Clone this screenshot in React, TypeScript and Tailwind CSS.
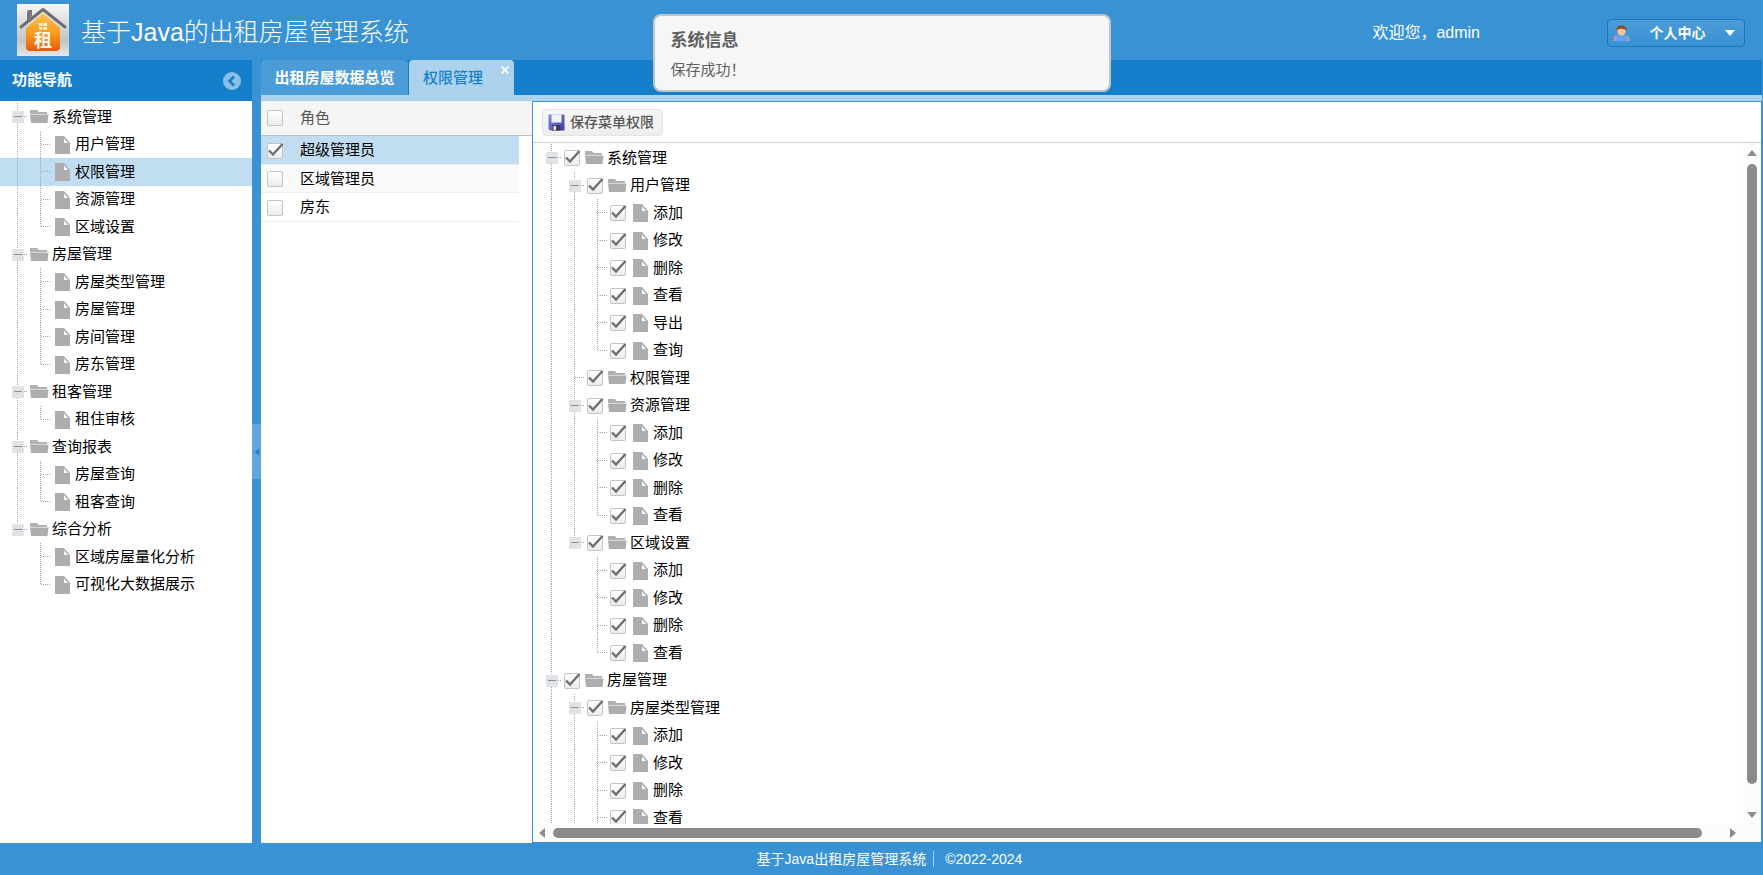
import React, { useState } from 'react';

type TreeNode = { text: string; children?: TreeNode[]; more?: boolean };

type FlatRow = {
  id: string;
  text: string;
  folder: boolean;
  expander: boolean;
  last: boolean;
  // one flag per ancestor level: does its vertical line continue past this row
  lines: boolean[];
};

const leaf = (...names: string[]): TreeNode[] => names.map((text) => ({ text }));

const NAV: TreeNode[] = [
  { text: '系统管理', children: leaf('用户管理', '权限管理', '资源管理', '区域设置') },
  { text: '房屋管理', children: leaf('房屋类型管理', '房屋管理', '房间管理', '房东管理') },
  { text: '租客管理', children: leaf('租住审核') },
  { text: '查询报表', children: leaf('房屋查询', '租客查询') },
  { text: '综合分析', children: leaf('区域房屋量化分析', '可视化大数据展示') },
];

const PERMISSIONS: TreeNode[] = [
  {
    text: '系统管理',
    children: [
      { text: '用户管理', children: leaf('添加', '修改', '删除', '查看', '导出', '查询') },
      { text: '权限管理', children: [] },
      { text: '资源管理', children: leaf('添加', '修改', '删除', '查看') },
      { text: '区域设置', children: leaf('添加', '修改', '删除', '查看') },
    ],
  },
  {
    text: '房屋管理',
    more: true,
    children: [
      {
        text: '房屋类型管理',
        more: true,
        children: [...leaf('添加', '修改', '删除'), { text: '查看', more: true }],
      },
    ],
  },
];

const ROLES = ['超级管理员', '区域管理员', '房东'];

const flatten = (nodes: TreeNode[], lines: boolean[] = [], prefix = ''): FlatRow[] =>
  nodes.flatMap((node, i) => {
    const last = i === nodes.length - 1 && !node.more;
    const id = `${prefix}${i}`;
    const row: FlatRow = {
      id,
      text: node.text,
      folder: node.children !== undefined,
      expander: !!node.children?.length,
      last,
      lines,
    };
    return [row, ...flatten(node.children ?? [], [...lines, !last], `${id}-`)];
  });

const Elbow = ({ expander, last }: { expander: boolean; last: boolean }) => (
  <svg className="h-full w-[23px] shrink-0" aria-hidden="true">
    <path d={last ? 'M11.5 0V14' : 'M11.5 0V28'} stroke="#a6a6a6" strokeDasharray="1 1" />
    <path d="M12 13.5H22" stroke="#a6a6a6" strokeDasharray="1 1" />
    {expander && (
      <>
        <rect x="6" y="8" width="12" height="12" fill="#dfe2e6" />
        <path d="M8 13.5H16" stroke="#8f8f8f" />
      </>
    )}
  </svg>
);

const Line = ({ show }: { show: boolean }) => (
  <svg className="h-full w-[23px] shrink-0" aria-hidden="true">
    {show && <path d="M11.5 0V28" stroke="#a6a6a6" strokeDasharray="1 1" />}
  </svg>
);

const FolderIcon = () => (
  <svg className="h-[18px] w-[23px] shrink-0" viewBox="0 0 23 18" aria-hidden="true">
    <path d="M1 2H8L9.5 4H18V6H1Z" fill="#b0b0b0" />
    <path d="M1 6.5H19.5L18.5 15H2Z" fill="#adadad" />
    <path d="M1 6.3H19" stroke="#d6d6d6" strokeWidth="0.8" />
  </svg>
);

const FileIcon = () => (
  <svg className="h-5 w-[23px] shrink-0" viewBox="0 0 23 20" aria-hidden="true">
    <path d="M3 1H12L18 8V19H3Z" fill="#adadad" />
    <path d="M12 3.5V8H16Z" fill="#fff" />
  </svg>
);

const Check = ({
  id,
  label,
  checked,
  onChange,
}: {
  id?: string;
  label?: string;
  checked: boolean;
  onChange: () => void;
}) => (
  <span className="relative flex size-4 shrink-0">
    <input
      id={id}
      type="checkbox"
      aria-label={label}
      checked={checked}
      onChange={onChange}
      className="size-4 appearance-none rounded-xs border border-[#c4c4c4] bg-linear-to-b from-white to-[#ececec]"
    />
    {checked && (
      <svg className="pointer-events-none absolute inset-0 size-4 overflow-visible" viewBox="0 0 16 16" aria-hidden="true">
        <path d="M2 7.5L6 11.5L15.5 1" fill="none" stroke="#6f6f6f" strokeWidth="2.4" />
      </svg>
    )}
  </span>
);

const Logo = () => (
  <svg className="size-[52px] shrink-0" viewBox="0 0 52 52" role="img" aria-label="租">
    <defs>
      <linearGradient id="logoBack" x1="0" y1="0" x2="0" y2="1">
        <stop offset="0" stopColor="#f6f6f6" />
        <stop offset="0.7" stopColor="#c4c4c6" />
        <stop offset="1" stopColor="#e6e6e6" />
      </linearGradient>
      <linearGradient id="logoHouse" x1="0" y1="0" x2="0" y2="1">
        <stop offset="0" stopColor="#fcc657" />
        <stop offset="0.55" stopColor="#f99a1c" />
        <stop offset="1" stopColor="#e8590a" />
      </linearGradient>
    </defs>
    <rect width="52" height="52" fill="url(#logoBack)" />
    <path d="M10 8Q10 6 12 6H15V12L10 17Z" fill="#77787b" />
    <path d="M9 24L26 9L43 24V43Q43 47 39 47H13Q9 47 9 43Z" fill="url(#logoHouse)" />
    <path d="M4 23L26 5.5L48 23" fill="none" stroke="#6d6e71" strokeWidth="3" strokeLinecap="round" strokeLinejoin="round" />
    <path d="M22 19H25.5V22H22ZM26.5 19H30V22H26.5ZM22 23H25.5V25.5H22ZM26.5 23H30V25.5H26.5Z" fill="#fff6dc" />
    <text x="26" y="43" textAnchor="middle" fontSize="18" fontWeight="700" fill="#fffaf0">
      租
    </text>
  </svg>
);

const UserIcon = () => (
  <svg className="size-[17px] shrink-0" viewBox="0 0 17 17" aria-hidden="true">
    <path d="M0.500 16Q0 11 4 10H13Q17 11 16.500 16Z" fill="#b99aa6" />
    <path d="M3 16.500Q2.500 10 6 9.500H11Q14.500 10 14 16.500Z" fill="#62a0f6" />
    <ellipse cx="8.500" cy="6" rx="4.200" ry="4.600" fill="#f0c39a" />
    <path d="M3.500 6Q3 0.500 8.500 0.500Q14 0.500 13.500 6Q12 3.500 8.500 3.800Q5 3.500 3.500 6Z" fill="#8a4b22" />
  </svg>
);

const SaveIcon = () => (
  <svg className="size-[17px] shrink-0" viewBox="0 0 17 17" aria-hidden="true">
    <defs>
      <linearGradient id="disk" x1="0" y1="0" x2="1" y2="1">
        <stop offset="0" stopColor="#8b8be6" />
        <stop offset="1" stopColor="#3c3ca8" />
      </linearGradient>
    </defs>
    <path d="M0.500 0.500H16.500V16.500H2L0.500 15Z" fill="url(#disk)" />
    <rect x="3.500" y="0.500" width="10" height="8" fill="#eef2fb" />
    <rect x="4.500" y="11" width="8" height="5.500" fill="#3b3b55" />
    <rect x="5.500" y="12" width="2.500" height="4" fill="#e8e8f0" />
  </svg>
);

const Arrow = ({ d, className }: { d: string; className: string }) => (
  <svg className={className} viewBox="0 0 10 10" aria-hidden="true">
    <path d={d} fill="currentColor" />
  </svg>
);

const App = () => {
  const rows = flatten(PERMISSIONS);
  const [active, setActive] = useState('0-1');
  const [role, setRole] = useState(0);
  const [off, setOff] = useState<string[]>([]);

  const toggle = (id: string) =>
    setOff((prev) => (prev.includes(id) ? prev.filter((x) => x !== id) : [...prev, id]));

  return (
    <div className="relative flex h-screen flex-col overflow-hidden bg-[#3892d4] font-['Liberation_Sans','Noto_Sans_CJK_SC',sans-serif] text-[15px] text-black">
      {/* Banner */}
      <header className="flex h-[60px] shrink-0 items-center pr-[18px] pl-[17px] text-white">
        <Logo />
        <h1 className="ml-3 pt-1.5 text-[25px] font-light">基于Java的出租房屋管理系统</h1>
        <p className="ml-auto pt-1.5 text-base">欢迎您，admin</p>
        <button
          type="button"
          className="mt-1.5 ml-[127px] flex h-7 w-[138px] items-center rounded-sm border border-[#1c76bd] bg-linear-to-b from-[#4b9cd7] to-[#3892d4] px-[5px] text-sm font-bold"
        >
          <UserIcon />
          <span className="flex-1 text-center">个人中心</span>
          <Arrow d="M0 2H10L5 8Z" className="mr-1 size-[10px]" />
        </button>
      </header>

      <div className="flex min-h-0 flex-1">
        {/* Navigation */}
        <aside className="flex w-[252px] shrink-0 flex-col bg-white">
          <div className="flex h-[41px] shrink-0 items-center justify-between bg-[#157fcc] pr-[11px] pl-3 text-white">
            <h2 className="font-bold">功能导航</h2>
            <button type="button" aria-label="收起" className="size-[18px]">
              <svg viewBox="0 0 18 18" aria-hidden="true">
                <circle cx="9" cy="9" r="9" fill="#8abfe6" />
                <path d="M11 4.500L6.500 9L11 13.500" fill="none" stroke="#157fcc" strokeWidth="2.600" />
              </svg>
            </button>
          </div>
          <nav className="pt-0.5">
            {flatten(NAV).map((row) => (
              <a
                key={row.id}
                href={`#${row.id}`}
                onClick={() => setActive(row.id)}
                className={`flex items-center pl-1.5 odd:h-7 even:h-[27px] ${row.id === active ? 'bg-[#c1ddf1]' : ''}`}
              >
                {row.lines.map((show, i) => (
                  <Line key={i} show={show} />
                ))}
                <Elbow expander={row.expander} last={row.last} />
                {row.folder ? <FolderIcon /> : <FileIcon />}
                <span>{row.text}</span>
              </a>
            ))}
          </nav>
        </aside>

        {/* Splitter */}
        <div className="flex w-[9px] shrink-0 items-center">
          <button
            type="button"
            aria-label="折叠"
            className="flex h-[55px] w-full items-center justify-center bg-[#5fa8dd] text-[#2a80c2]"
          >
            <Arrow d="M2 5L8 0V10Z" className="size-2" />
          </button>
        </div>

        {/* Workspace */}
        <main className="flex min-w-0 flex-1 flex-col pr-px">
          <div className="flex h-[35px] shrink-0 gap-px bg-[#157fcc]">
            <button type="button" className="w-[147px] rounded-t-sm bg-[#4b9cd7] pt-0.5 font-bold text-white">
              出租房屋数据总览
            </button>
            <div className="relative flex w-[105px] rounded-t-sm bg-[#add2ed]">
              <button type="button" className="pt-0.5 pl-[14px] font-medium text-[#157fcc]">
                权限管理
              </button>
              <button type="button" aria-label="关闭" className="absolute top-1 right-[3px] size-3">
                <svg viewBox="0 0 12 12" aria-hidden="true">
                  <path d="M2.500 2.500L9.500 9.500M9.500 2.500L2.500 9.500" stroke="#f4f9fd" strokeWidth="1.800" />
                </svg>
              </button>
            </div>
          </div>
          <div className="h-1.5 shrink-0 bg-[#add2ed]" />

          <div className="flex min-h-0 flex-1">
            {/* Roles */}
            <section className="w-[271px] shrink-0 bg-white">
              <table className="w-full table-fixed">
                <thead>
                  <tr className="h-[34px] border-b border-[#c0c0c0] bg-[#f5f5f5]">
                    <th className="w-[39px] pl-1.5">
                      <Check label="全选" checked={false} onChange={() => setRole(0)} />
                    </th>
                    <th className="text-left font-normal text-[#555]">角色</th>
                    <th className="w-[13px]" />
                  </tr>
                </thead>
                <tbody>
                  {ROLES.map((name, i) => (
                    <tr key={name} className="odd:h-[29px] even:h-7">
                      <td className={`border-b border-[#ededed] pt-0.5 pl-1.5 ${role === i ? 'bg-[#c1ddf1]' : i % 2 ? 'bg-[#fafafa]' : ''}`}>
                        <Check id={`role-${i}`} checked={role === i} onChange={() => setRole(i)} />
                      </td>
                      <td className={`border-b border-[#ededed] pt-0.5 ${role === i ? 'bg-[#c1ddf1]' : i % 2 ? 'bg-[#fafafa]' : ''}`}>
                        <label htmlFor={`role-${i}`}>{name}</label>
                      </td>
                      <td />
                    </tr>
                  ))}
                </tbody>
              </table>
            </section>

            {/* Permissions */}
            <section className="flex min-w-0 flex-1 flex-col border border-[#3892d4] bg-white">
              <div className="flex h-[41px] shrink-0 items-center border-b border-[#d0d0d0] px-[9px]">
                <button
                  type="button"
                  className="flex h-[27px] items-center gap-[5px] rounded-sm border border-[#e4e4e4] bg-linear-to-b from-[#f6f6f6] to-[#eeeeee] px-[5px] pr-2 text-sm font-medium text-[#555]"
                >
                  <SaveIcon />
                  保存菜单权限
                </button>
              </div>
              <div className="flex min-h-0 flex-1">
                <div className="min-w-0 flex-1 overflow-hidden pt-px">
                  {rows.map((row) => (
                    <div key={row.id} className="flex items-center pl-[7px] odd:h-7 even:h-[27px]">
                      {row.lines.map((show, i) => (
                        <Line key={i} show={show} />
                      ))}
                      <Elbow expander={row.expander} last={row.last} />
                      <span className="w-[21px] shrink-0 pl-px">
                        <Check id={`perm-${row.id}`} checked={!off.includes(row.id)} onChange={() => toggle(row.id)} />
                      </span>
                      {row.folder ? <FolderIcon /> : <FileIcon />}
                      <label htmlFor={`perm-${row.id}`}>{row.text}</label>
                    </div>
                  ))}
                </div>
                <div className="flex w-[18px] shrink-0 flex-col items-center gap-1.5 bg-[#fcfcfc] pt-[5px] pb-1 text-[#8b8b8b]">
                  <Arrow d="M0 8L5 2L10 8Z" className="size-[10px]" />
                  <div className="mb-5 w-[10px] flex-1 rounded-full bg-[#8b8b8b]" />
                  <Arrow d="M0 2L5 8L10 2Z" className="size-[10px]" />
                </div>
              </div>
              <div className="flex h-[18px] shrink-0 items-center gap-1.5 bg-[#fcfcfc] pr-[23px] pl-1 text-[#8b8b8b]">
                <Arrow d="M8 0L2 5L8 10Z" className="size-[10px]" />
                <div className="mr-5 h-[10px] flex-1 rounded-full bg-[#8b8b8b]" />
                <Arrow d="M2 0L8 5L2 10Z" className="size-[10px]" />
              </div>
            </section>
          </div>
        </main>
      </div>

      <footer className="flex h-8 shrink-0 items-center justify-center gap-[7px] pl-4 text-sm text-white">
        <span>基于Java出租房屋管理系统</span>
        <span className="h-4 w-px bg-[#a9cfee]" />
        <span className="pl-1">©2022-2024</span>
      </footer>

      {/* Toast */}
      <div
        role="status"
        className="absolute top-[14px] left-1/2 flex h-[78px] w-[458px] -translate-x-1/2 flex-col rounded-lg border-2 border-[#bfc4c8] bg-[#f6f6f6] px-4 pt-[10px] text-[#606060]"
      >
        <strong className="text-[17px] leading-[30px]">系统信息</strong>
        <span className="leading-7">保存成功！</span>
      </div>
    </div>
  );
};

export default App;
